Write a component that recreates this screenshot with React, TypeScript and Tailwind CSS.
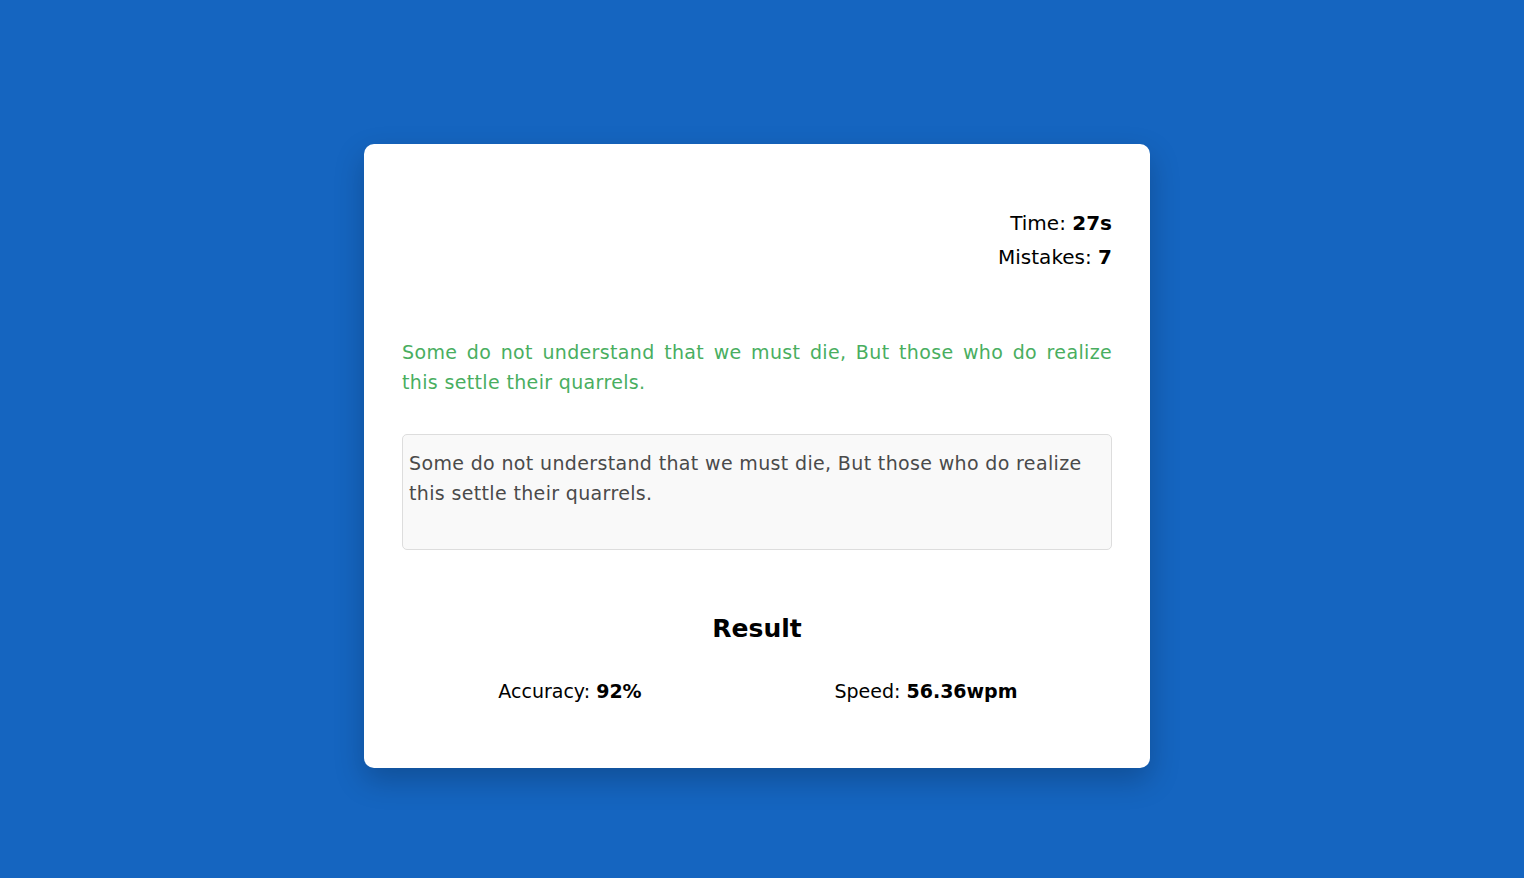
import React from "react";

const quote =
  "Some do not understand that we must die, But those who do realize this settle their quarrels.";

const font = '"DejaVu Sans", "Open Sans", sans-serif';

export default function App() {
  return (
    <div
      className="min-h-[878px] w-full bg-[#1565c0] pt-[144px] pb-[110px]"
      style={{ fontFamily: font }}
    >
      <div className="ml-[364px] w-[786px] rounded-[10px] bg-white px-[38px] pt-[62px] pb-[63px] shadow-[0_12px_30px_rgba(0,0,0,0.22)]">
        <div className="text-right text-[20px] leading-[34px] text-black">
          <p>
            Time: <span className="font-bold">27s</span>
          </p>
          <p>
            Mistakes: <span className="font-bold">7</span>
          </p>
        </div>

        <p className="mt-[63px] text-justify text-[19px] leading-[30px] tracking-[0.35px] text-[#49ae5f]">
          {quote}
        </p>

        <textarea
          readOnly
          defaultValue={quote}
          className="mt-[37px] block h-[116px] w-full resize-none rounded-[5px] border border-[#dddddd] bg-[#f9f9f9] px-[6px] py-[13px] text-[19px] leading-[30px] tracking-[0.35px] text-[#4a4a4a] outline-none"
          style={{ fontFamily: font }}
        />

        <h2 className="mt-[59px] text-center text-[25px] leading-[40px] font-bold text-black">
          Result
        </h2>

        <div className="mt-[28px] -ml-[10px] grid w-[712px] grid-cols-2 text-center text-[19px] leading-[28px] text-black">
          <p>
            Accuracy: <span className="font-bold">92%</span>
          </p>
          <p>
            Speed: <span className="font-bold">56.36wpm</span>
          </p>
        </div>
      </div>
    </div>
  );
}
